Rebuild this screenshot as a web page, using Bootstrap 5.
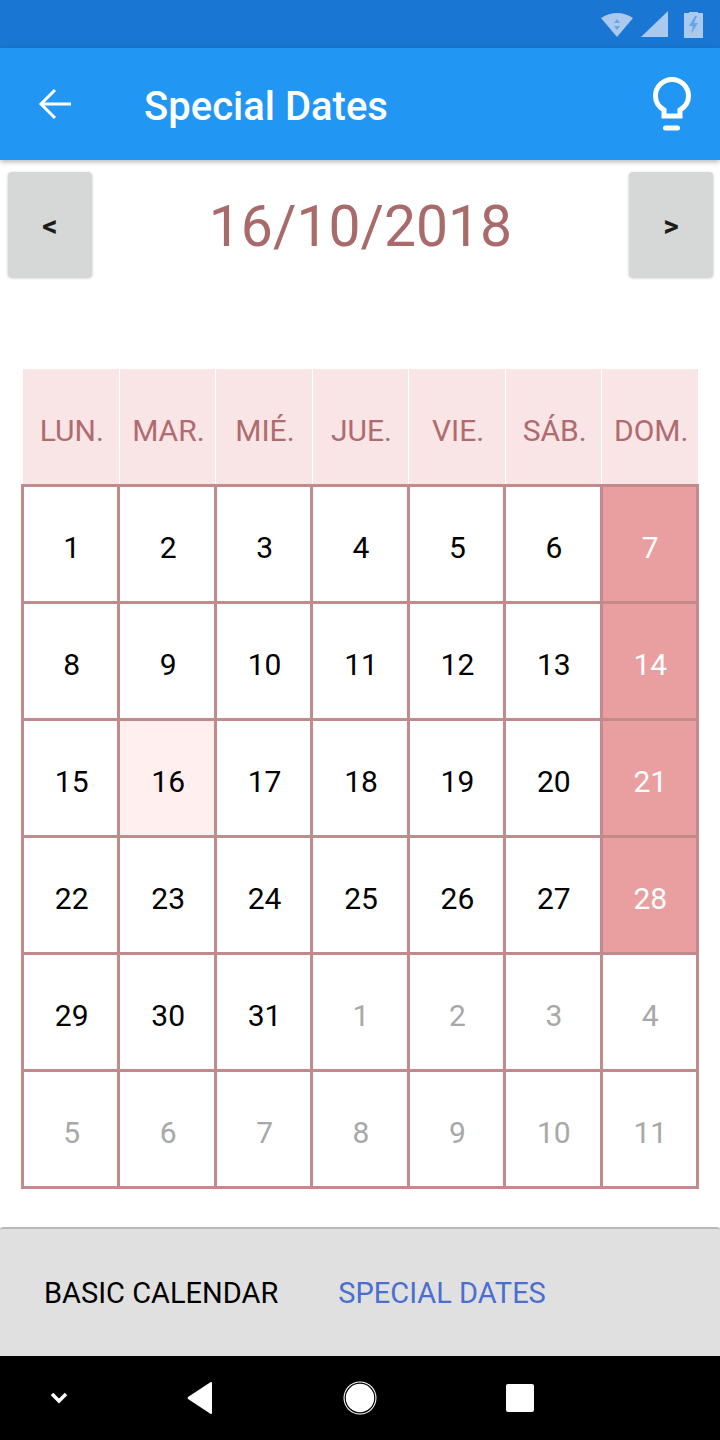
<!DOCTYPE html>
<html lang="es">
<head>
<meta charset="utf-8">
<title>Special Dates</title>
<link href="https://cdn.jsdelivr.net/npm/bootstrap@5.3.0/dist/css/bootstrap.min.css" rel="stylesheet">
<style>
html,body{margin:0;height:1440px;overflow:hidden;background:#fff;font-family:Roboto,"Liberation Sans",sans-serif}
.shell{width:720px;height:1440px}
.statusrow{height:48px;background:#1976d2;padding-right:17px}
.wifiglyph{margin-right:7px}
.signalglyph{margin-right:15px}
.appbar{height:112px;background:#2196f3;box-shadow:0 2px 5px rgba(0,0,0,.28);position:relative;z-index:2}
.backglyph{margin-left:38px}
.bulbglyph{margin-right:28px}
.apptitle{font-size:40px;font-weight:500;color:#fff;margin:6px 0 0 72px;line-height:1}
.daterow{height:105px;margin:12px 7px 0 8px}
.stepbtn{width:84px;height:105px;background:#d6d7d7;border:0;border-radius:4px;box-shadow:0 1px 3px rgba(0,0,0,.25);font-size:30px;font-weight:700;color:#1c1c1c;padding:3px 0 0;line-height:1}
.stepbtn:hover{background:#d6d7d7;color:#1c1c1c}
.bigdate{font-size:57px;color:#a96a6a;line-height:1;padding-top:3px}
.weekhead{display:grid;grid-template-columns:repeat(7,1fr);gap:1px;width:675px;height:115px;margin:92px 0 0 23px}
.weekcell{background:#f9e4e6;color:#b06b6e;font-size:30px;display:flex;align-items:center;justify-content:center;padding:8px 0 0 2px}
.monthgrid{display:grid;grid-template-columns:repeat(7,1fr);grid-auto-rows:114px;gap:3px;width:678px;margin:0 0 0 21px;padding:3px;background:#c28a8c}
.daycell{background:#fff;color:#000;font-size:30px;display:flex;align-items:center;justify-content:center;padding:6px 0 0 2px}
.daycell.sunday{background:#e99e9f;color:#fff}
.daycell.today{background:#fff0ef}
.daycell.muted{color:#a8a8a8}
.tabbar{height:129px;margin-top:38px;background:#e0e0e0;border-top:2px solid #b8b8b8;border-radius:3px 3px 0 0;padding:2px 0 0 44px;gap:60px}
.tabitem{display:block;white-space:nowrap;font-size:29px;line-height:1;color:#000;padding:0}
.tabitem.current,.tabitem.current:hover{color:#4a6fd0}
.tabitem:hover{color:#000}
.sysnav{height:84px;background:#000}
</style>
</head>
<body>
<div class="shell d-flex flex-column">
  <div class="statusrow d-flex align-items-center justify-content-end">
    <svg class="wifiglyph" width="34" height="26" viewBox="0 0 34 26" aria-hidden="true"><path d="M1 7Q17-3 33 7L17 26Z" fill="#a9c9ee"/><path d="M17 8l3 4h-6zM17 19l3-4h-6z" fill="#1976d2" opacity=".45"/></svg>
    <svg class="signalglyph" width="28" height="27" viewBox="0 0 28 27" aria-hidden="true"><path d="M27 0V26H0Z" fill="#a9c9ee"/></svg>
    <svg width="19" height="27" viewBox="0 0 19 27" aria-hidden="true"><path d="M5 1h9v1h5v25H0V2h5Z" fill="#a9c9ee"/><path d="M11 5 5 15h4l-2 8 7-11h-4l3-7Z" fill="#1976d2" opacity=".45"/></svg>
  </div>
  <nav class="navbar appbar flex-nowrap justify-content-start align-items-center p-0">
    <svg class="backglyph" width="34" height="32" viewBox="0 0 34 32" fill="none" stroke="#fff" stroke-width="3" aria-hidden="true"><path d="M33 16H3M17 2 3 16l14 14"/></svg>
    <span class="apptitle">Special Dates</span>
    <svg class="bulbglyph ms-auto" width="40" height="56" viewBox="0 0 40 56" fill="none" stroke="#fff" stroke-width="5" aria-hidden="true"><path d="M12 40V34C7 31 3.500 26 3.500 20a16.500 16.500 0 0 1 33 0c0 6-3.500 11-8.500 14v6Z"/><path d="M13.500 52H25.500" stroke-linecap="round"/></svg>
  </nav>
  <div class="daterow d-flex align-items-center justify-content-between">
    <button class="btn stepbtn" type="button">&lt;</button>
    <div class="bigdate">16/10/2018</div>
    <button class="btn stepbtn" type="button">&gt;</button>
  </div>
  <div class="weekhead">
    <div class="weekcell">LUN.</div><div class="weekcell">MAR.</div><div class="weekcell">MIÉ.</div><div class="weekcell">JUE.</div><div class="weekcell">VIE.</div><div class="weekcell">SÁB.</div><div class="weekcell">DOM.</div>
  </div>
  <div class="monthgrid">
    <div class="daycell">1</div><div class="daycell">2</div><div class="daycell">3</div><div class="daycell">4</div><div class="daycell">5</div><div class="daycell">6</div><div class="daycell sunday">7</div>
    <div class="daycell">8</div><div class="daycell">9</div><div class="daycell">10</div><div class="daycell">11</div><div class="daycell">12</div><div class="daycell">13</div><div class="daycell sunday">14</div>
    <div class="daycell">15</div><div class="daycell today">16</div><div class="daycell">17</div><div class="daycell">18</div><div class="daycell">19</div><div class="daycell">20</div><div class="daycell sunday">21</div>
    <div class="daycell">22</div><div class="daycell">23</div><div class="daycell">24</div><div class="daycell">25</div><div class="daycell">26</div><div class="daycell">27</div><div class="daycell sunday">28</div>
    <div class="daycell">29</div><div class="daycell">30</div><div class="daycell">31</div><div class="daycell muted">1</div><div class="daycell muted">2</div><div class="daycell muted">3</div><div class="daycell muted">4</div>
    <div class="daycell muted">5</div><div class="daycell muted">6</div><div class="daycell muted">7</div><div class="daycell muted">8</div><div class="daycell muted">9</div><div class="daycell muted">10</div><div class="daycell muted">11</div>
  </div>
  <div class="nav tabbar align-items-center flex-nowrap">
    <a class="nav-link tabitem" href="#">BASIC CALENDAR</a>
    <a class="nav-link tabitem current" href="#">SPECIAL DATES</a>
  </div>
  <div class="sysnav">
    <svg width="720" height="84" viewBox="0 0 720 84" aria-hidden="true">
      <path d="M52 38l7 7 7-7" fill="none" stroke="#fff" stroke-width="3.500"/>
      <path d="M212 27V57a1 1 0 0 1-1.600.8L188 43a1.500 1.500 0 0 1 0-2L210.400 26.200A1 1 0 0 1 212 27Z" fill="#fff"/>
      <circle cx="360" cy="42" r="16.500" fill="#fff"/>
      <circle cx="360" cy="42" r="14.800" fill="none" stroke="#000" stroke-width="1.200"/>
      <rect x="506" y="28" width="28" height="28" rx="2" fill="#fff"/>
    </svg>
  </div>
</div>
<script src="https://cdn.jsdelivr.net/npm/bootstrap@5.3.0/dist/js/bootstrap.bundle.min.js"></script>
</body>
</html>
